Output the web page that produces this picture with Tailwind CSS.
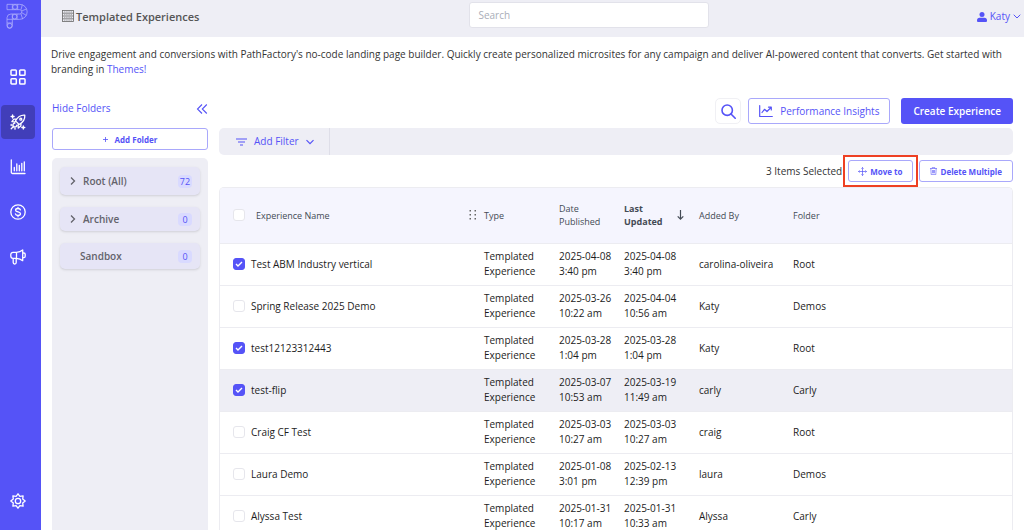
<!DOCTYPE html>
<html lang="en">
    <head>
        <meta charset="utf-8">
        <meta name="viewport" content="width=device-width, initial-scale=1">
        <title>Templated Experiences</title>
        <script src="https://cdn.jsdelivr.net/npm/@tailwindcss/browser@4"></script>
    </head>
    <body class="flex h-screen overflow-hidden bg-white font-['Open_Sans','Noto_Sans',sans-serif] text-[10px] leading-[15px] text-[#333]">

        <!-- Sidebar -->
        <nav class="flex w-[41px] shrink-0 flex-col items-start bg-[#5553f7] pl-px text-white">
            <a href="#" aria-label="Home" class="mt-[3px] pl-[5px]">
                <svg class="h-[27px] w-[23px]" viewBox="19 10 69 81" fill="none" stroke="#b4b3fc" stroke-width="2.2">
                    <path d="M22 14h38a22 22 0 0 1 0 45H38v19a8 8 0 0 1-16 0V54a12 12 0 0 1 12-11h26a6.500 6.500 0 0 0 0-13H22zM38 14v16M54 14v16M22 59h16M22 70h16M38 43v16M52 43v16M68 15l-4 15M80 28l-14 6M80 47l-14-8M64 43l5 15"/>
                    <circle cx="30" cy="78" r="7"/><circle cx="46" cy="22" r="7"/><circle cx="45" cy="51" r="7"/>
                </svg>
            </a>
            <a href="#" aria-label="Dashboard" class="mt-[30px] flex size-[34px] items-center justify-center">
                <svg class="size-4" viewBox="0 0 16 16" fill="none" stroke="currentColor" stroke-width="1.5">
                    <rect x="1" y="1" width="5.3" height="5.3" rx=".8"/><rect x="9.7" y="1" width="5.3" height="5.3" rx=".8"/>
                    <rect x="1" y="9.7" width="5.3" height="5.3" rx=".8"/><rect x="9.7" y="9.7" width="5.3" height="5.3" rx=".8"/>
                </svg>
            </a>
            <a href="#" aria-label="Experiences" class="mt-[11px] flex size-[34px] items-center justify-center rounded bg-[#413eb9]">
                <svg class="size-4" viewBox="0 0 16 16" fill="none" stroke="currentColor" stroke-width="1.3" stroke-linecap="round" stroke-linejoin="round">
                    <path d="M14.800 1.200C11 .9 7.900 2.600 5.500 6.900l3.600 3.600c4.300-2.400 6-5.500 5.700-9.300zM6.900 4.900l-3 .3-2 2.500 3.200.2M11.100 9.100l-.3 3-2.500 2-.2-3.200M4.800 9.200c-1.300.1-2 .8-2 2.900M6.800 11.200c-.1 1.300-.8 2-2.900 2M1.200 14.800l2.600-2.600M1.200 11.500v-1M4.500 14.800h1"/>
                    <circle cx="10.800" cy="5.200" r="1"/>
                    <path d="M2.600 1v3M1.100 2.500h3M13.300 12v3M11.800 13.500h3"/>
                </svg>
            </a>
            <a href="#" aria-label="Analytics" class="mt-[11px] flex size-[34px] items-center justify-center">
                <svg class="size-4" viewBox="0 0 16 16" fill="none" stroke="currentColor" stroke-width="1.3" stroke-linecap="round">
                    <path d="M1.300 1v12.200a1.300 1.300 0 0 0 1.300 1.300H15M4.300 8.500v3.300M6.800 4.800v7M9.300 6.300v5.500M11.800 4.300v7.500M14.300 2.800v9"/>
                </svg>
            </a>
            <a href="#" aria-label="Revenue" class="mt-[11px] flex size-[34px] items-center justify-center">
                <svg class="size-4" viewBox="0 0 16 16" fill="none" stroke="currentColor" stroke-width="1.3" stroke-linecap="round">
                    <circle cx="8" cy="8" r="7.200"/>
                    <path d="M10.400 5.900C10.200 5 9.300 4.500 8 4.500c-1.500 0-2.400.7-2.400 1.700C5.600 8.600 10.500 7.300 10.500 9.800c0 1-1 1.700-2.500 1.700-1.400 0-2.400-.6-2.600-1.600M8 3.300v1.200M8 11.500v1.200"/>
                </svg>
            </a>
            <a href="#" aria-label="Campaigns" class="mt-[11px] flex size-[34px] items-center justify-center">
                <svg class="size-4" viewBox="0 0 16 16" fill="none" stroke="currentColor" stroke-width="1.3" stroke-linecap="round" stroke-linejoin="round">
                    <path d="M6.500 3.300H3A2.200 2.200 0 0 0 .8 5.500v1.600A2.200 2.200 0 0 0 3 9.300h3.500M6.500 3.300v6M6.500 3.300C9 3.200 11 2.400 12.700.9v10.800C11 10.200 9 9.400 6.500 9.300M12.700 4h1.200a1.300 1.300 0 0 1 1.300 1.300v2a1.300 1.300 0 0 1-1.300 1.300h-1.200M3.200 9.300v4.200a1.500 1.500 0 0 0 3 0V9.300"/>
                </svg>
            </a>
            <a href="#" aria-label="Settings" class="mt-auto mb-3 flex size-[34px] items-center justify-center">
                <svg class="size-4" viewBox="0 0 16 16" fill="none" stroke="currentColor" stroke-width="1.3" stroke-linejoin="round">
                    <path d="M8 .8l1.900 2.500 3.200-.4-.4 3.200L15.200 8l-2.500 1.900.4 3.200-3.200-.4L8 15.200l-1.900-2.500-3.200.4.4-3.200L.8 8l2.500-1.900-.4-3.200 3.200.4z"/>
                    <circle cx="8" cy="8" r="2.700"/>
                </svg>
            </a>
        </nav>

        <div class="flex min-w-0 flex-1 flex-col">

            <!-- Top bar -->
            <header class="grid h-[37px] shrink-0 grid-cols-[11fr_240px_8fr] bg-[#eeeef5] pr-[3px]">
                <div class="flex items-center gap-0.5 pb-1.5 pl-[21px]">
                    <svg class="size-3" viewBox="0 0 12 12" fill="none" stroke="#666" stroke-width=".8">
                        <rect x=".5" y=".5" width="11" height="11"/>
                        <path d="M.5 3.200h11M.5 6h11M.5 8.800h11"/>
                        <path d="M2 1.900h8M2 4.600h8M2 7.400h8M2 10.200h8" stroke-width=".5" stroke-dasharray="1.400 .8"/>
                    </svg>
                    <h1 class="mt-0.5 text-[11px] font-semibold text-[#555]">Templated Experiences</h1>
                </div>
                <input type="text" aria-label="Search" placeholder="Search" class="mt-0.5 h-[26px] rounded-[3px] border border-[#e2e2ea] bg-white px-2 outline-none placeholder:text-[#a9adb8]">
                <button class="flex items-center gap-[3px] justify-self-end pb-1 text-[#5553f7]">
                    <svg class="size-[10px]" viewBox="0 0 10 10" fill="currentColor">
                        <circle cx="5" cy="2.600" r="2.500"/>
                        <path d="M1 10a1 1 0 0 1-1-1V8.500A2.700 2.700 0 0 1 2.700 5.800h4.600A2.700 2.700 0 0 1 10 8.500V9a1 1 0 0 1-1 1z"/>
                    </svg>
                    Katy
                    <svg class="size-2" viewBox="0 0 8 8" fill="none" stroke="currentColor" stroke-linecap="round"><path d="M1 2l3 3 3-3"/></svg>
                </button>
            </header>

            <p class="mt-2.5 px-[10px]">Drive engagement and conversions with PathFactory's no-code landing page builder. Quickly create personalized microsites for any campaign and deliver AI-powered content that converts. Get started with branding in <a href="#" class="text-[#5553f7]">Themes!</a></p>

            <div class="mt-5 flex min-h-0 flex-1 gap-[11px] px-[11px]">

                <!-- Folders -->
                <aside class="flex w-[156px] shrink-0 flex-col">
                    <button class="flex h-[23px] items-center justify-between text-[#5553f7]">
                        Hide Folders
                        <svg class="size-3" viewBox="0 0 12 12" fill="none" stroke="currentColor" stroke-width="1.1"><path d="M6 1.500L1.500 6 6 10.500M10.800 1.500L6.300 6l4.500 4.500"/></svg>
                    </button>
                    <button class="mt-2 flex h-[22px] shrink-0 items-center justify-center gap-[7px] rounded-[3px] border border-[#a9a8fb] text-[8px] font-bold text-[#5553f7]">
                        <svg class="size-[5px]" viewBox="0 0 5 5" stroke="currentColor" stroke-width=".8"><path d="M2.500 0v5M0 2.500h5"/></svg>
                        Add Folder
                    </button>
                    <ul class="mt-2 flex-1 space-y-3 rounded-t-[5px] bg-[#eeeef5] px-2 pt-[9px] font-semibold text-[#63636b]">
                        <li class="flex h-7 items-center rounded-[5px] bg-[#e6e5f6] pr-2 pl-2.5 shadow">
                            <svg class="mr-[7px] size-[6px] overflow-visible" viewBox="0 0 6 6" fill="none" stroke="currentColor" stroke-width="1.3"><path d="M1-.5L4.500 3 1 6.500"/></svg>
                            Root (All)
                            <span class="ml-auto w-[14px] rounded-sm bg-[#d9daff] text-center text-[9px] leading-[13px] font-normal text-[#5553f7]">72</span>
                        </li>
                        <li class="flex h-6 items-center rounded-[5px] bg-[#e6e5f6] pr-2 pl-2.5 shadow">
                            <svg class="mr-[7px] size-[6px] overflow-visible" viewBox="0 0 6 6" fill="none" stroke="currentColor" stroke-width="1.3"><path d="M1-.5L4.500 3 1 6.500"/></svg>
                            Archive
                            <span class="ml-auto w-[14px] rounded-sm bg-[#d9daff] text-center text-[9px] leading-[13px] font-normal text-[#5553f7]">0</span>
                        </li>
                        <li class="flex h-[26px] items-center rounded-[5px] bg-[#e6e5f6] pr-2 pl-5 shadow">
                            Sandbox
                            <span class="ml-auto w-[14px] rounded-sm bg-[#d9daff] text-center text-[9px] leading-[13px] font-normal text-[#5553f7]">0</span>
                        </li>
                    </ul>
                </aside>

                <main class="flex min-w-0 flex-1 flex-col pt-px">
                    <div class="flex shrink-0 items-center justify-end gap-[11px]">
                        <button aria-label="Search experiences" class="-mr-1 flex size-[26px] items-center justify-center rounded-[5px] border border-[#f0f0f4] text-[#5553f7]">
                            <svg class="size-[15px]" viewBox="0 0 15 15" fill="none" stroke="currentColor" stroke-width="1.6" stroke-linecap="round"><circle cx="6.200" cy="6.200" r="5.200"/><path d="M10 10l4.200 4.200"/></svg>
                        </button>
                        <button class="flex h-[26px] items-center gap-[7px] rounded-[3px] border border-[#a9a8fb] px-2.5 text-[#5553f7]">
                            <svg class="size-[14px]" viewBox="0 0 14 14" fill="none" stroke="currentColor" stroke-width="1.2" stroke-linecap="round" stroke-linejoin="round"><path d="M.7 1.500v11h12.600M3 8.500l2.500-3.200 2.500 2.200 4-4M9.500 3.200h2.800V6"/></svg>
                            Performance Insights
                        </button>
                        <button class="h-[26px] rounded-[3px] bg-[#5553f7] px-3 font-semibold text-white">Create Experience</button>
                    </div>

                    <div class="mt-1 flex h-[27px] shrink-0 rounded-[5px] bg-[#eeeef5]">
                        <button class="flex items-center gap-[7px] border-r border-[#dedee8] pr-[15px] pl-[17px] text-[#5553f7]">
                            <svg class="w-[11px]" viewBox="0 0 11 8" stroke="currentColor" stroke-width="1.2"><path d="M0 1h11M2 4h7M4 7h3"/></svg>
                            Add Filter
                            <svg class="size-2" viewBox="0 0 8 8" fill="none" stroke="currentColor" stroke-width="1.2"><path d="M.5 2.200L4 5.700l3.500-3.500"/></svg>
                        </button>
                    </div>

                    <div class="flex h-8 shrink-0 items-center justify-end gap-1.5">
                        <span>3 Items Selected</span>
                        <div class="relative">
                            <button class="flex h-[22px] items-center gap-[3px] rounded-[3px] border border-[#a9a8fb] px-[9px] text-[8px] font-bold text-[#5553f7]">
                                <svg class="size-[9px]" viewBox="0 0 9 9" fill="none" stroke="currentColor" stroke-width=".7"><path d="M4.500.5v8M.5 4.500h8M3.400 1.600L4.500.5l1.100 1.100M3.400 7.400l1.100 1.100 1.100-1.100M1.600 3.400L.5 4.500l1.100 1.100M7.400 3.400l1.100 1.100-1.100 1.100"/></svg>
                                Move to
                            </button>
                            <div class="pointer-events-none absolute -inset-x-[5px] -inset-y-[5px] border-2 border-[#ee4023]"></div>
                        </div>
                        <button class="flex h-[22px] items-center gap-1 rounded-[3px] border border-[#a9a8fb] px-2.5 text-[8px] font-bold text-[#5553f7]">
                            <svg class="h-[8px] w-[7px]" viewBox="0 0 7 8" fill="none" stroke="currentColor" stroke-width=".6"><path d="M0 1.500h7M2.300 1.500V.4h2.400v1.100M.8 1.500l.4 6.100h4.600l.4-6.100M2.500 3v3.300M3.500 3v3.300M4.500 3v3.300"/></svg>
                            Delete Multiple
                        </button>
                    </div>

                    <!-- Experiences -->
                    <div class="min-h-0 flex-1 overflow-hidden rounded-t-[5px] border border-b-0 border-[#ececf1]">
                        <table class="w-full table-fixed text-left text-[#1c1c1c]">
                            <colgroup>
                                <col class="w-[31px]"><col><col class="w-[75px]"><col class="w-[65px]"><col class="w-[75px]"><col class="w-[94px]"><col class="w-[219px]">
                            </colgroup>
                            <thead class="bg-[#f5f5fe] text-[9px] leading-[13px] text-[#444b55]">
                                <tr class="h-[55px] border-b border-[#ececf1] *:font-normal">
                                    <th class="pl-[13px]"><input type="checkbox" aria-label="Select all" class="block size-3 appearance-none rounded-[3px] border border-[#e6e6ec] bg-white"></th>
                                    <th class="pl-[5px]">
                                        <div class="flex items-center justify-between pr-[7px]">
                                            Experience Name
                                            <svg class="h-[10px] w-2" viewBox="0 0 8 10" fill="#666"><path d="M.5 0H2v1.500H.5zM5.500 0H7v1.500H5.500zM.5 4H2v1.500H.5zM5.500 4H7v1.500H5.500zM.5 8H2v1.500H.5zM5.500 8H7v1.500H5.500z"/></svg>
                                        </div>
                                    </th>
                                    <th>Type</th>
                                    <th>Date<br>Published</th>
                                    <th>
                                        <div class="flex items-center justify-between pr-[15px] font-bold">
                                            <span>Last<br>Updated</span>
                                            <svg class="h-[10px] w-[7px]" viewBox="0 0 7 10" fill="none" stroke="currentColor" stroke-width="1.2"><path d="M3.500 0v9M.7 6.300l2.800 2.800 2.800-2.800"/></svg>
                                        </div>
                                    </th>
                                    <th>Added By</th>
                                    <th>Folder</th>
                                </tr>
                            </thead>
                            <tbody>
                                <tr class="h-[42px] border-b border-[#ececf1]">
                                    <td class="pl-[13px]">
                                        <div class="grid size-3 place-items-center *:[grid-area:1/1]">
                                            <input id="row1" type="checkbox" checked class="peer size-3 appearance-none rounded-[3px] border border-[#e6e6ec] bg-white checked:border-[#5553f7] checked:bg-[#5553f7]">
                                            <svg class="pointer-events-none hidden size-2 peer-checked:block" viewBox="0 0 8 8" fill="none" stroke="#fff" stroke-width="1.4"><path d="M1 4l2 2 4-4"/></svg>
                                        </div>
                                    </td>
                                    <td><label for="row1">Test ABM Industry vertical</label></td>
                                    <td>Templated<br>Experience</td>
                                    <td>2025-04-08<br>3:40 pm</td>
                                    <td>2025-04-08<br>3:40 pm</td>
                                    <td>carolina-oliveira</td>
                                    <td>Root</td>
                                </tr>
                                <tr class="h-[42px] border-b border-[#ececf1]">
                                    <td class="pl-[13px]">
                                        <div class="grid size-3 place-items-center *:[grid-area:1/1]">
                                            <input id="row2" type="checkbox" class="peer size-3 appearance-none rounded-[3px] border border-[#e6e6ec] bg-white checked:border-[#5553f7] checked:bg-[#5553f7]">
                                            <svg class="pointer-events-none hidden size-2 peer-checked:block" viewBox="0 0 8 8" fill="none" stroke="#fff" stroke-width="1.4"><path d="M1 4l2 2 4-4"/></svg>
                                        </div>
                                    </td>
                                    <td><label for="row2">Spring Release 2025 Demo</label></td>
                                    <td>Templated<br>Experience</td>
                                    <td>2025-03-26<br>10:22 am</td>
                                    <td>2025-04-04<br>10:56 am</td>
                                    <td>Katy</td>
                                    <td>Demos</td>
                                </tr>
                                <tr class="h-[42px] border-b border-[#ececf1]">
                                    <td class="pl-[13px]">
                                        <div class="grid size-3 place-items-center *:[grid-area:1/1]">
                                            <input id="row3" type="checkbox" checked class="peer size-3 appearance-none rounded-[3px] border border-[#e6e6ec] bg-white checked:border-[#5553f7] checked:bg-[#5553f7]">
                                            <svg class="pointer-events-none hidden size-2 peer-checked:block" viewBox="0 0 8 8" fill="none" stroke="#fff" stroke-width="1.4"><path d="M1 4l2 2 4-4"/></svg>
                                        </div>
                                    </td>
                                    <td><label for="row3">test12123312443</label></td>
                                    <td>Templated<br>Experience</td>
                                    <td>2025-03-28<br>1:04 pm</td>
                                    <td>2025-03-28<br>1:04 pm</td>
                                    <td>Katy</td>
                                    <td>Root</td>
                                </tr>
                                <tr class="h-[42px] border-b border-[#ececf1] bg-[#eeeef5]">
                                    <td class="pl-[13px]">
                                        <div class="grid size-3 place-items-center *:[grid-area:1/1]">
                                            <input id="row4" type="checkbox" checked class="peer size-3 appearance-none rounded-[3px] border border-[#e6e6ec] bg-white checked:border-[#5553f7] checked:bg-[#5553f7]">
                                            <svg class="pointer-events-none hidden size-2 peer-checked:block" viewBox="0 0 8 8" fill="none" stroke="#fff" stroke-width="1.4"><path d="M1 4l2 2 4-4"/></svg>
                                        </div>
                                    </td>
                                    <td><label for="row4">test-flip</label></td>
                                    <td>Templated<br>Experience</td>
                                    <td>2025-03-07<br>10:53 am</td>
                                    <td>2025-03-19<br>11:49 am</td>
                                    <td>carly</td>
                                    <td>Carly</td>
                                </tr>
                                <tr class="h-[42px] border-b border-[#ececf1]">
                                    <td class="pl-[13px]">
                                        <div class="grid size-3 place-items-center *:[grid-area:1/1]">
                                            <input id="row5" type="checkbox" class="peer size-3 appearance-none rounded-[3px] border border-[#e6e6ec] bg-white checked:border-[#5553f7] checked:bg-[#5553f7]">
                                            <svg class="pointer-events-none hidden size-2 peer-checked:block" viewBox="0 0 8 8" fill="none" stroke="#fff" stroke-width="1.4"><path d="M1 4l2 2 4-4"/></svg>
                                        </div>
                                    </td>
                                    <td><label for="row5">Craig CF Test</label></td>
                                    <td>Templated<br>Experience</td>
                                    <td>2025-03-03<br>10:27 am</td>
                                    <td>2025-03-03<br>10:27 am</td>
                                    <td>craig</td>
                                    <td>Root</td>
                                </tr>
                                <tr class="h-[42px] border-b border-[#ececf1]">
                                    <td class="pl-[13px]">
                                        <div class="grid size-3 place-items-center *:[grid-area:1/1]">
                                            <input id="row6" type="checkbox" class="peer size-3 appearance-none rounded-[3px] border border-[#e6e6ec] bg-white checked:border-[#5553f7] checked:bg-[#5553f7]">
                                            <svg class="pointer-events-none hidden size-2 peer-checked:block" viewBox="0 0 8 8" fill="none" stroke="#fff" stroke-width="1.4"><path d="M1 4l2 2 4-4"/></svg>
                                        </div>
                                    </td>
                                    <td><label for="row6">Laura Demo</label></td>
                                    <td>Templated<br>Experience</td>
                                    <td>2025-01-08<br>3:01 pm</td>
                                    <td>2025-02-13<br>12:39 pm</td>
                                    <td>laura</td>
                                    <td>Demos</td>
                                </tr>
                                <tr class="h-[42px] border-b border-[#ececf1]">
                                    <td class="pl-[13px]">
                                        <div class="grid size-3 place-items-center *:[grid-area:1/1]">
                                            <input id="row7" type="checkbox" class="peer size-3 appearance-none rounded-[3px] border border-[#e6e6ec] bg-white checked:border-[#5553f7] checked:bg-[#5553f7]">
                                            <svg class="pointer-events-none hidden size-2 peer-checked:block" viewBox="0 0 8 8" fill="none" stroke="#fff" stroke-width="1.4"><path d="M1 4l2 2 4-4"/></svg>
                                        </div>
                                    </td>
                                    <td><label for="row7">Alyssa Test</label></td>
                                    <td>Templated<br>Experience</td>
                                    <td>2025-01-31<br>10:17 am</td>
                                    <td>2025-01-31<br>10:33 am</td>
                                    <td>Alyssa</td>
                                    <td>Carly</td>
                                </tr>
                            </tbody>
                        </table>
                    </div>
                </main>
            </div>
        </div>
    </body>
</html>
